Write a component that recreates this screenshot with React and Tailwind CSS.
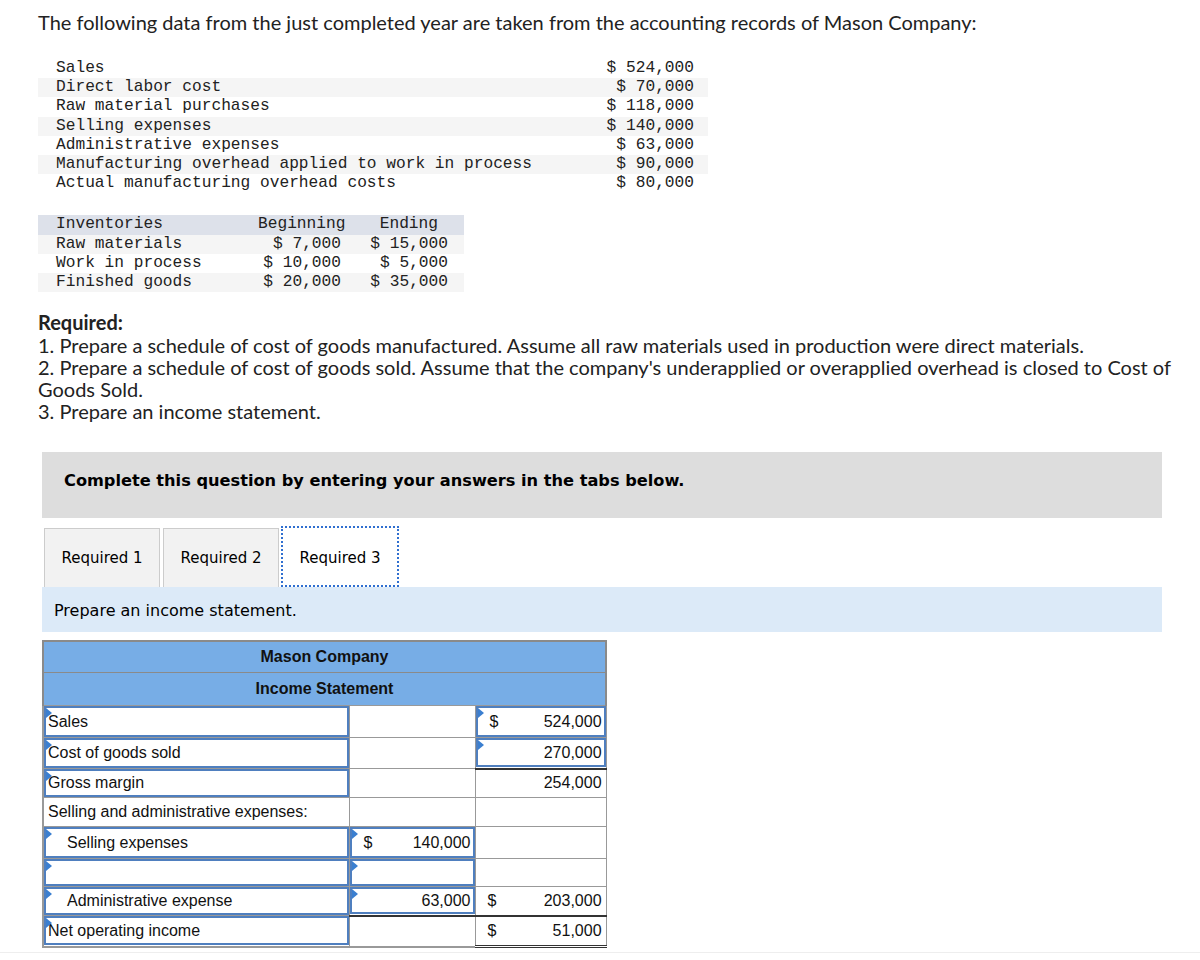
import React from "react";

const mono = { fontFamily: '"Liberation Mono", "Courier New", monospace' };

const dataRows = [
  ["Sales", "$ 524,000"],
  ["Direct labor cost", "$ 70,000"],
  ["Raw material purchases", "$ 118,000"],
  ["Selling expenses", "$ 140,000"],
  ["Administrative expenses", "$ 63,000"],
  ["Manufacturing overhead applied to work in process", "$ 90,000"],
  ["Actual manufacturing overhead costs", "$ 80,000"],
];

const invRows = [
  ["Raw materials", "$ 7,000", "$ 15,000"],
  ["Work in process", "$ 10,000", "$ 5,000"],
  ["Finished goods", "$ 20,000", "$ 35,000"],
];

// blue marker in the corner of an input cell
const Flag = () => (
  <span className="absolute left-0 top-0 h-0 w-0 border-t-[5px] border-b-[5px] border-l-[6px] border-t-transparent border-b-transparent border-l-[#3b7fd0]" />
);

const Input = ({ children, h, className = "" }) => (
  <div className={`relative flex items-center border-2 border-[#4f7fbf] ${className}`} style={{ height: h }}>
    <Flag />
    {children}
  </div>
);

const Money = ({ sign, value }) => (
  <div className="flex w-full items-center justify-between pl-3 pr-[2px]">
    <span>{sign ? "$" : ""}</span>
    <span>{value}</span>
  </div>
);

export default function App() {
  return (
    <div className="min-h-[960px] w-[1200px] bg-white text-black">
      <div className="pl-[38px] pr-4 pt-[10px]" style={{ fontFamily: 'Lato, "Open Sans", sans-serif' }}>
        <p className="text-[20px] leading-6 text-[#222]">
          The following data from the just completed year are taken from the accounting records of Mason Company:
        </p>

        {/* cost data */}
        <div className="mt-[25px] w-[670px] text-[16.2px] leading-[19.2px] text-[#222]" style={mono}>
          {dataRows.map(([label, value], i) => (
            <div key={label} className={`flex justify-between pl-[18px] pr-[14px] ${i % 2 === 1 ? "bg-[#f5f5f5]" : ""}`}>
              <span>{label}</span>
              <span>{value}</span>
            </div>
          ))}
        </div>

        {/* inventories */}
        <div className="mt-[22px] w-[426px] text-[16.2px] leading-[19.2px] text-[#222]" style={mono}>
          <div className="grid grid-cols-[202px_87px_103px] bg-[#dde1ea] pl-[18px]">
            <span>Inventories</span>
            <span className="text-right">Beginning</span>
            <span className="pr-[10px] text-right">Ending</span>
          </div>
          {invRows.map(([label, b, e], i) => (
            <div key={label} className={`grid grid-cols-[202px_87px_103px] pl-[18px] ${i % 2 === 0 ? "bg-[#f5f5f5]" : ""}`}>
              <span>{label}</span>
              <span className="pr-[4px] text-right">{b}</span>
              <span className="text-right">{e}</span>
            </div>
          ))}
        </div>

        {/* required */}
        <div className="mt-[19px] text-[20px] leading-[22.3px] text-[#222]">
          <p className="font-bold">Required:</p>
          <p>1. Prepare a schedule of cost of goods manufactured. Assume all raw materials used in production were direct materials.</p>
          <p>2. Prepare a schedule of cost of goods sold. Assume that the company's underapplied or overapplied overhead is closed to Cost of Goods Sold.</p>
          <p>3. Prepare an income statement.</p>
        </div>
      </div>

      <div className="ml-[42px] mt-[29px] w-[1120px]" style={{ fontFamily: '"DejaVu Sans", Verdana, sans-serif' }}>
        <div className="flex h-[66px] items-center bg-[#dddddd] pb-[8px] pl-[22px] text-[16.2px] font-bold">
          Complete this question by entering your answers in the tabs below.
        </div>

        {/* tabs */}
        <div className="mt-[10px] flex h-[59px] items-end gap-[3px] pl-[2px] text-[15px]">
          <div className="flex h-[59px] w-[116px] items-center justify-center border border-b-0 border-[#cccccc] bg-[#f2f2f2] pt-[2px]">Required 1</div>
          <div className="flex h-[59px] w-[116px] items-center justify-center border border-b-0 border-[#cccccc] bg-[#f2f2f2] pt-[2px]">Required 2</div>
          <div className="-ml-[1px] flex h-[61px] w-[118px] items-center justify-center border-2 border-dotted border-[#2f6fd0] bg-white pt-[4px]">Required 3</div>
        </div>
        <div className="flex h-[45px] items-center bg-[#dceaf8] pl-[12px] pt-[4px] text-[16px]">Prepare an income statement.</div>

        {/* income statement */}
        <table
          className="mt-[8px] w-[563px] table-fixed border-collapse text-[16px] text-[#111]"
          style={{ fontFamily: '"Liberation Sans", Arial, sans-serif' }}
        >
          <colgroup>
            <col className="w-[306px]" />
            <col className="w-[126px]" />
            <col className="w-[131px]" />
          </colgroup>
          <tbody>
            <tr className="h-[32px] bg-[#77ade6]">
              <td colSpan={3} className="border-2 border-b border-[#8a8a8a] text-center font-bold">Mason Company</td>
            </tr>
            <tr className="h-[33px] bg-[#77ade6]">
              <td colSpan={3} className="border-x-2 border-[#8a8a8a] text-center font-bold">Income Statement</td>
            </tr>
            <tr className="h-[32px]">
              <td className="border border-l-2 border-[#999] p-0"><Input h={31} className="pl-[2px]">Sales</Input></td>
              <td className="border border-[#999] p-0" />
              <td className="border border-[#999] p-0"><Input h={31}><Money sign value="524,000" /></Input></td>
            </tr>
            <tr className="h-[31px]">
              <td className="border border-l-2 border-[#999] p-0"><Input h={30} className="pl-[2px]">Cost of goods sold</Input></td>
              <td className="border border-[#999] p-0" />
              <td className="border border-b-2 border-[#999] border-b-[#333] p-0"><Input h={29}><Money value="270,000" /></Input></td>
            </tr>
            <tr className="h-[29px]">
              <td className="border border-l-2 border-[#999] p-0"><Input h={28} className="pl-[2px]">Gross margin</Input></td>
              <td className="border border-[#999] p-0" />
              <td className="border border-[#999] p-0 pr-[2px]"><Money value="254,000" /></td>
            </tr>
            <tr className="h-[29px]">
              <td className="border border-l-2 border-[#999] pl-[4px]">Selling and administrative expenses:</td>
              <td className="border border-[#999] p-0" />
              <td className="border border-[#999] p-0" />
            </tr>
            <tr className="h-[32px]">
              <td className="border border-l-2 border-[#999] p-0"><Input h={31} className="pl-[21px]">Selling expenses</Input></td>
              <td className="border border-[#999] p-0"><Input h={31}><Money sign value="140,000" /></Input></td>
              <td className="border border-[#999] p-0" />
            </tr>
            <tr className="h-[28px]">
              <td className="border border-l-2 border-[#999] p-0"><Input h={27} /></td>
              <td className="border border-[#999] p-0"><Input h={27} /></td>
              <td className="border border-[#999] p-0" />
            </tr>
            <tr className="h-[29px]">
              <td className="border border-l-2 border-[#999] p-0"><Input h={28} className="pl-[21px]">Administrative expense</Input></td>
              <td className="border border-b-2 border-[#999] border-b-[#333] p-0"><Input h={27}><Money value="63,000" /></Input></td>
              <td className="border border-b-2 border-[#999] border-b-[#333] p-0 pr-[2px]"><Money sign value="203,000" /></td>
            </tr>
            <tr className="h-[31px]">
              <td className="border border-l-2 border-b-2 border-[#999] p-0"><Input h={29} className="pl-[2px]">Net operating income</Input></td>
              <td className="border border-b-2 border-[#999] p-0" />
              <td className="border-b-[3px] border-r border-double border-b-[#333] border-r-[#999] p-0 pr-[2px]"><Money sign value="51,000" /></td>
            </tr>
          </tbody>
        </table>
      </div>
      <div className="mt-[4px] h-px w-full bg-[#eeeeee]" />
    </div>
  );
}
